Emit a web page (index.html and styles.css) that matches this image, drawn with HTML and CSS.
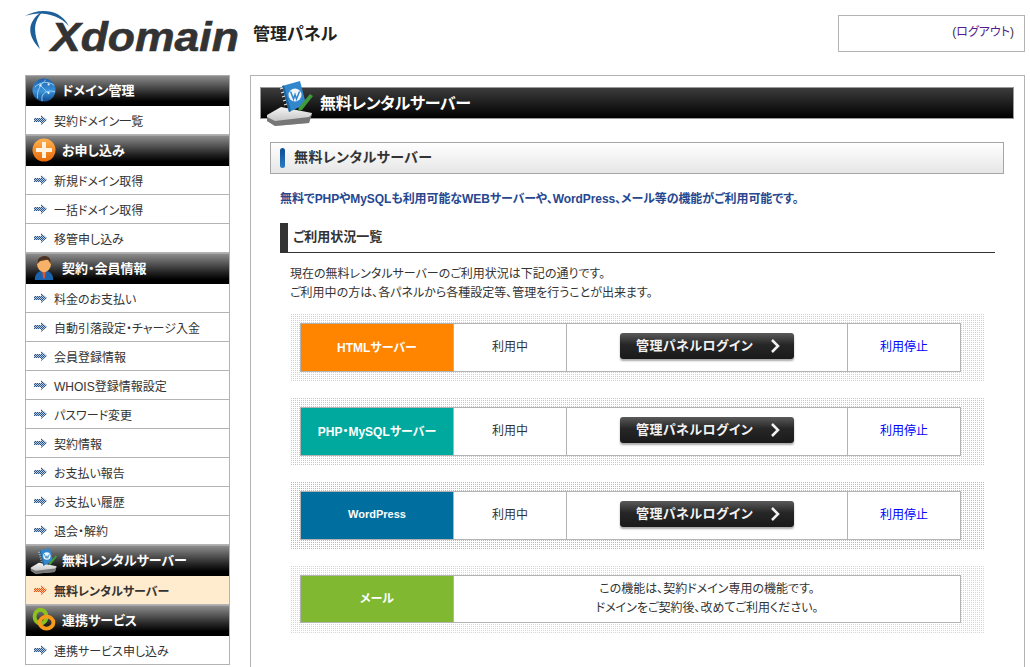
FILE: index.html
```html
<!DOCTYPE html>
<html lang="ja">

<head>
    <meta charset="UTF-8">
    <title>管理パネル</title>
    <link rel="stylesheet" href="styles.css">
</head>

<body>
    <svg class="defs" width="0" height="0">
        <defs>
            <linearGradient id="globeFill" x1="0" y1="0" x2="0" y2="1">
                <stop offset="0" stop-color="#1f5fa8" />
                <stop offset=".55" stop-color="#3a93dc" />
                <stop offset="1" stop-color="#0f4a8a" />
            </linearGradient>
            <linearGradient id="orangeFill" x1="0" y1="0" x2="0" y2="1">
                <stop offset="0" stop-color="#ffb14d" />
                <stop offset="1" stop-color="#e86a0a" />
            </linearGradient>
            <linearGradient id="diskFill" x1="0" y1="0" x2="0" y2="1">
                <stop offset="0" stop-color="#f5f5f5" />
                <stop offset="1" stop-color="#b5b5b5" />
            </linearGradient>
            <pattern id="hatchBlue" width="2" height="2" patternUnits="userSpaceOnUse">
                <rect width="2" height="2" fill="#b8c8da" />
                <rect width="1" height="1" fill="#2a5688" />
                <rect x="1" y="1" width="1" height="1" fill="#2a5688" />
            </pattern>
            <pattern id="hatchOrange" width="2" height="2" patternUnits="userSpaceOnUse">
                <rect width="2" height="2" fill="#ffc99a" />
                <rect width="1" height="1" fill="#e8501a" />
                <rect x="1" y="1" width="1" height="1" fill="#e8501a" />
            </pattern>
            <symbol id="arrow" viewBox="0 0 13 10">
                <path d="M0 3h7V0l6 5-6 5V7H0z" fill="url(#hatchBlue)" />
            </symbol>
            <symbol id="arrowOn" viewBox="0 0 13 10">
                <path d="M0 3h7V0l6 5-6 5V7H0z" fill="url(#hatchOrange)" />
            </symbol>
            <symbol id="globe" viewBox="0 0 26 26">
                <circle cx="13" cy="13" r="12.500" fill="url(#globeFill)" />
                <path d="M3 10C9 4 18 3 24 8M6 22C5 14 9 7 15 2M11 25C9 17 16 12 25 15M9 8l9 9" fill="none" stroke="#a5dcfa" stroke-width=".9" />
                <circle cx="9" cy="8" r="1.200" fill="#e2f4ff" />
                <circle cx="18" cy="7" r="1.200" fill="#e2f4ff" />
                <circle cx="18" cy="16" r="1.200" fill="#e2f4ff" />
            </symbol>
            <symbol id="plus" viewBox="0 0 24 24">
                <circle cx="12" cy="12" r="11.500" fill="url(#orangeFill)" />
                <path d="M10 4h4v6h6v4h-6v6h-4v-6H4v-4h6z" fill="#fff3e0" />
            </symbol>
            <symbol id="person" viewBox="0 0 22 26">
                <path d="M1 26c0-7 4-10 10-10s10 3 10 10z" fill="#1b62ad" />
                <path d="M9 16h4l-1 8h-2z" fill="#e0562a" />
                <ellipse cx="11" cy="9" rx="7.500" ry="8.500" fill="#f7b267" />
                <path d="M4 9C3 2 8 0 12 0c5 0 7 4 6 9-1-3-2-5-4-5-3 1-8 0-10 5z" fill="#4a3322" />
            </symbol>
            <symbol id="server" viewBox="0 0 56 52">
                <path d="M5 39l14-8 31 6-3 10-34 3-8-5z" fill="url(#diskFill)" />
                <path d="M5 41l8 4 34-4 3-3-3 9-34 3-8-5z" fill="#777" />
                <path d="M20 10L38 5l6 23-17 8z" fill="#3286cc" />
                <path d="M20 10l2-.6 7 25.600-2 1z" fill="#1c659f" />
                <circle cx="33" cy="19" r="6.500" fill="#f0f6fb" />
                <path d="M28.500 15.500l3 7.500 1.500-4.500 1.500 4.500 3-7.500" fill="none" stroke="#3286cc" stroke-width="1.500" />
                <path d="M48 18l3 2-11 14-4 1 1-4z" fill="#3f9a3a" />
                <path d="M21 12l-3 1M22 16l-3 1M23 20l-3 1M24 24l-3 1M25 28l-3 1" stroke="#e8e8e8" stroke-width="1.100" />
            </symbol>
            <symbol id="rings" viewBox="0 0 28 28">
                <ellipse cx="10" cy="10" rx="7" ry="8" fill="none" stroke="#8cc21f" stroke-width="4.500" />
                <ellipse cx="17" cy="17" rx="8" ry="7" fill="none" stroke="#f59a1b" stroke-width="4.500" />
            </symbol>
        </defs>
    </svg>
    <div class="page">
        <header class="topbar">
            <div class="logo">
                <span class="logotext">Xdomain</span>
                <svg class="swoosh" width="50" height="45" viewBox="0 0 50 45">
                    <path d="M0 8C12 1 34-1 44 18 32 5 14 3 0 8z" fill="#1d5f98" />
                    <path d="M18 3C6 10-2 24 15 41 8 24 8 14 18 3z" fill="#1d5f98" />
                </svg>
            </div>
            <div class="paneltitle">管理パネル</div>
            <div class="logoutbox">(<a href="#">ログアウト</a>)</div>
        </header>
        <div class="columns">
            <nav class="sidebar">
                <div class="sidehead"><svg class="sideicon"><use href="#globe" /></svg>ドメイン管理</div>
                <a class="sideitem" href="#"><svg class="arrow"><use href="#arrow" /></svg>契約ドメイン一覧</a>
                <div class="sidehead"><svg class="sideicon"><use href="#plus" /></svg>お申し込み</div>
                <a class="sideitem" href="#"><svg class="arrow"><use href="#arrow" /></svg>新規ドメイン取得</a>
                <a class="sideitem" href="#"><svg class="arrow"><use href="#arrow" /></svg>一括ドメイン取得</a>
                <a class="sideitem" href="#"><svg class="arrow"><use href="#arrow" /></svg>移管申し込み</a>
                <div class="sidehead"><svg class="sideicon"><use href="#person" /></svg>契約・会員情報</div>
                <a class="sideitem" href="#"><svg class="arrow"><use href="#arrow" /></svg>料金のお支払い</a>
                <a class="sideitem" href="#"><svg class="arrow"><use href="#arrow" /></svg>自動引落設定・チャージ入金</a>
                <a class="sideitem" href="#"><svg class="arrow"><use href="#arrow" /></svg>会員登録情報</a>
                <a class="sideitem" href="#"><svg class="arrow"><use href="#arrow" /></svg>WHOIS登録情報設定</a>
                <a class="sideitem" href="#"><svg class="arrow"><use href="#arrow" /></svg>パスワード変更</a>
                <a class="sideitem" href="#"><svg class="arrow"><use href="#arrow" /></svg>契約情報</a>
                <a class="sideitem" href="#"><svg class="arrow"><use href="#arrow" /></svg>お支払い報告</a>
                <a class="sideitem" href="#"><svg class="arrow"><use href="#arrow" /></svg>お支払い履歴</a>
                <a class="sideitem" href="#"><svg class="arrow"><use href="#arrow" /></svg>退会・解約</a>
                <div class="sidehead"><svg class="sideicon sideicon-wide"><use href="#server" /></svg>無料レンタルサーバー</div>
                <a class="sideitem current" href="#"><svg class="arrow"><use href="#arrowOn" /></svg>無料レンタルサーバー</a>
                <div class="sidehead"><svg class="sideicon"><use href="#rings" /></svg>連携サービス</div>
                <a class="sideitem" href="#"><svg class="arrow"><use href="#arrow" /></svg>連携サービス申し込み</a>
            </nav>
            <main class="content">
                <h1 class="pagetitle"><svg class="titleicon"><use href="#server" /></svg>無料レンタルサーバー</h1>
                <h2 class="sectionhead">無料レンタルサーバー</h2>
                <p class="lead">無料でPHPやMySQLも利用可能なWEBサーバーや、WordPress、メール等の機能がご利用可能です。</p>
                <h3 class="subhead">ご利用状況一覧</h3>
                <p class="note">現在の無料レンタルサーバーのご利用状況は下記の通りです。<br>ご利用中の方は、各パネルから各種設定等、管理を行うことが出来ます。</p>

                <div class="plan plan-orange">
                    <div class="plangrid">
                        <div class="planname">HTMLサーバー</div>
                        <div class="plancell">利用中</div>
                        <div class="plancell"><a class="loginbtn" href="#">管理パネルログイン<svg class="chevron" viewBox="0 0 10 14"><path d="M2 1l6 6-6 6" /></svg></a></div>
                        <div class="plancell"><a class="stoplink" href="#">利用停止</a></div>
                    </div>
                </div>
                <div class="plan plan-teal">
                    <div class="plangrid">
                        <div class="planname">PHP・MySQLサーバー</div>
                        <div class="plancell">利用中</div>
                        <div class="plancell"><a class="loginbtn" href="#">管理パネルログイン<svg class="chevron" viewBox="0 0 10 14"><path d="M2 1l6 6-6 6" /></svg></a></div>
                        <div class="plancell"><a class="stoplink" href="#">利用停止</a></div>
                    </div>
                </div>
                <div class="plan plan-blue">
                    <div class="plangrid">
                        <div class="planname planname-small">WordPress</div>
                        <div class="plancell">利用中</div>
                        <div class="plancell"><a class="loginbtn" href="#">管理パネルログイン<svg class="chevron" viewBox="0 0 10 14"><path d="M2 1l6 6-6 6" /></svg></a></div>
                        <div class="plancell"><a class="stoplink" href="#">利用停止</a></div>
                    </div>
                </div>
                <div class="plan plan-green">
                    <div class="plangrid plangrid-wide">
                        <div class="planname">メール</div>
                        <div class="plancell">この機能は、契約ドメイン専用の機能です。<br>ドメインをご契約後、改めてご利用ください。</div>
                    </div>
                </div>
            </main>
        </div>
    </div>
</body>

</html>
```

FILE: styles.css
```css
html, body {
    margin: 0;
    padding: 0;
}

body {
    font-family: "Liberation Sans", "Noto Sans CJK JP", sans-serif;
    font-size: 12px;
    font-feature-settings: "palt";
    color: #333;
    background-color: #fff;
}

a {
    text-decoration: none;
}

.defs {
    position: absolute;
}

.page {
    height: 100vh;
    overflow: hidden;
    padding-left: 25px;
    box-sizing: border-box;
}

/* header */
.topbar {
    display: flex;
    align-items: center;
    height: 75px;
}

.logo {
    position: relative;
    width: 228px;
    height: 60px;
}

.swoosh {
    position: absolute;
    left: 0;
    top: 0;
}

.logotext {
    position: absolute;
    left: 26px;
    top: 2px;
    font-size: 41px;
    line-height: 54px;
    font-weight: 700;
    font-style: italic;
    color: #333;
    -webkit-text-stroke: 0.6px #333;
    transform: scaleX(1.085);
    transform-origin: left center;
}

.paneltitle {
    font-size: 17px;
    font-weight: 700;
    color: #222;
    margin-bottom: 10px;
}

.logoutbox {
    width: 175px;
    height: 35px;
    line-height: 33px;
    margin: 0 5px 8px auto;
    padding-right: 10px;
    border: 1px solid #b3b3b3;
    text-align: right;
}

.logoutbox a {
    color: #551a8b;
}

.columns {
    display: flex;
    align-items: flex-start;
    gap: 20px;
}

/* side menu */
.sidebar {
    width: 203px;
    flex: none;
    border: 1px solid #b3b3b3;
    border-width: 0 1px;
}

.sidehead {
    display: flex;
    align-items: center;
    height: 27px;
    padding-bottom: 3px;
    border-top: 1px solid #aaa;
    background: linear-gradient(#8c8c8c, #222 62%, #000 85%);
    color: #fff;
    font-size: 13px;
    font-weight: 700;
}

.sideicon {
    width: 24px;
    height: 24px;
    margin: 0 6px;
    flex: none;
}

.sideicon-wide {
    width: 32px;
    height: 30px;
    margin: 0 2px;
}

.sideitem {
    display: flex;
    align-items: center;
    height: 28px;
    border-bottom: 1px solid #b3b3b3;
    color: #333;
    padding-left: 8px;
}

.sideitem.current {
    background-color: #ffebcd;
    font-weight: 700;
}

.arrow {
    width: 13px;
    height: 10px;
    margin-right: 7px;
    flex: none;
}

/* main panel */
.content {
    width: 775px;
    height: 620px;
    flex: none;
    box-sizing: border-box;
    border: 1px solid #b3b3b3;
    border-bottom: 0;
    padding: 11px 10px 0 9px;
}

.pagetitle {
    position: relative;
    display: flex;
    align-items: center;
    height: 28px;
    margin: 0;
    padding: 0 0 2px 59px;
    border: 1px solid #999;
    background: linear-gradient(#3c3c3c, #000);
    color: #fff;
    font-size: 16px;
    letter-spacing: -0.3px;
    font-weight: 700;
}

.titleicon {
    position: absolute;
    left: 1px;
    top: -12px;
    width: 56px;
    height: 52px;
}

.sectionhead {
    position: relative;
    height: 30px;
    line-height: 28px;
    margin: 23px 10px 0 10px;
    padding-left: 23px;
    border: 1px solid #a6a6a6;
    background: linear-gradient(#fff, #e6e6e6);
    color: #333;
    font-size: 14px;
    letter-spacing: 0.4px;
    font-weight: 700;
}

.sectionhead::before {
    content: "";
    position: absolute;
    left: 9px;
    top: 5px;
    width: 5px;
    height: 20px;
    border-radius: 3px;
    background: linear-gradient(#0f4c92, #2a7cc4);
}

.lead {
    margin: 16px 0 0 20px;
    line-height: 19px;
    font-weight: 700;
    letter-spacing: -0.08px;
    color: #27478f;
}

.subhead {
    height: 29px;
    line-height: 27px;
    margin: 14px 19px 0 20px;
    padding-left: 5px;
    border-left: 8px solid #333;
    border-bottom: 1px solid #333;
    font-size: 13px;
    font-weight: 700;
    color: #333;
}

.note {
    margin: 12px 0 0 30px;
    line-height: 19px;
}

/* plan rows */
.plan {
    width: 695px;
    margin: 10px 0 15px 30px;
    padding: 10px 24px 10px 10px;
    box-sizing: border-box;
    background:
        linear-gradient(90deg, #fff 1px, transparent 1px) 0 0 / 2px 2px,
        linear-gradient(#fff 1px, transparent 1px) 0 0 / 2px 2px,
        var(--dot);
}

.plan + .plan {
    margin-top: 0;
}

.plan-orange {
    --dot: #fac88f;
    --tone: #ff8400;
}

.plan-teal {
    --dot: #9fdad5;
    --tone: #00a99d;
}

.plan-blue {
    --dot: #9fc4d8;
    --tone: #006e9e;
}

.plan-green {
    --dot: #cfe4a8;
    --tone: #80b931;
}

.plangrid {
    display: grid;
    grid-template-columns: 152px 113px 281px 1fr;
    height: 47px;
    border: 1px solid #b3b3b3;
    background-color: #fff;
}

.plangrid-wide {
    grid-template-columns: 152px 1fr;
    height: 46px;
}

.planname {
    display: flex;
    align-items: center;
    justify-content: center;
    padding-bottom: 3px;
    background-color: var(--tone);
    color: #fff;
    font-weight: 700;
}

.planname-small {
    font-size: 11px;
}

.plancell {
    display: flex;
    align-items: center;
    justify-content: center;
    border-left: 1px solid #b3b3b3;
    text-align: center;
    line-height: 19px;
}

.loginbtn {
    display: flex;
    align-items: center;
    justify-content: space-between;
    box-sizing: border-box;
    width: 174px;
    height: 26px;
    margin-bottom: 3px;
    padding: 0 14px 1px 16px;
    border-radius: 3px;
    background: linear-gradient(#5a5a5a, #262626 45%, #1a1a1a);
    box-shadow: 0 2px 2px #aaa;
    color: #f2f2f2;
    font-size: 13px;
    letter-spacing: 0.4px;
    font-weight: 700;
}

.chevron {
    width: 10px;
    height: 14px;
    fill: none;
    stroke: #f2f2f2;
    stroke-width: 2.500;
}

.stoplink {
    color: #00f;
}
```
